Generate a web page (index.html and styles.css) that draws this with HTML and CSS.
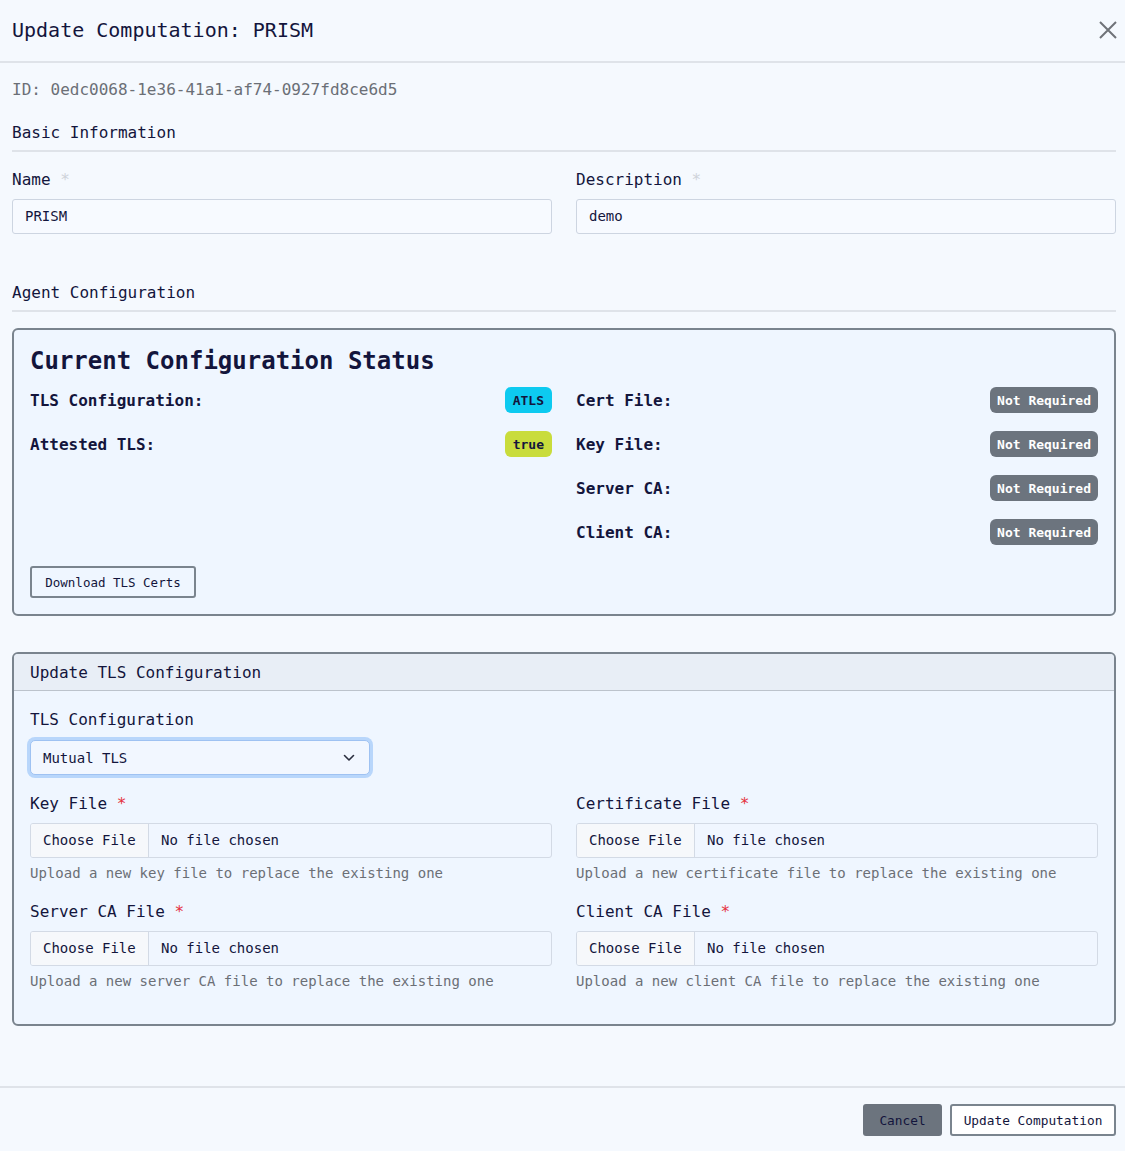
FILE: index.html
```html
<!DOCTYPE html>
<html lang="en">
<head>
<meta charset="utf-8">
<title>Update Computation: PRISM</title>
<link rel="stylesheet" href="styles.css">
</head>
<body>
<div class="modal">
  <header class="modal-header">
    <h1 class="modal-title">Update Computation: PRISM</h1>
    <button class="close-btn" aria-label="Close">
      <svg width="18" height="18" viewBox="0 0 18 18"><path d="M1 1L17 17M17 1L1 17" stroke="#6f7378" stroke-width="2" fill="none"/></svg>
    </button>
  </header>

  <div class="modal-body">
    <p class="id-line">ID: 0edc0068-1e36-41a1-af74-0927fd8ce6d5</p>

    <h2 class="section-title">Basic Information</h2>
    <div class="grid-2">
      <div class="field">
        <label class="field-label">Name <span class="req-light">*</span></label>
        <div class="text-input">PRISM</div>
      </div>
      <div class="field">
        <label class="field-label">Description <span class="req-light">*</span></label>
        <div class="text-input">demo</div>
      </div>
    </div>

    <h2 class="section-title agent">Agent Configuration</h2>

    <section class="status-card">
      <h3 class="status-title">Current Configuration Status</h3>
      <div class="status-grid">
        <div class="status-col">
          <div class="status-row"><span class="status-key">TLS Configuration:</span><span class="badge badge-info">ATLS</span></div>
          <div class="status-row"><span class="status-key">Attested TLS:</span><span class="badge badge-lime">true</span></div>
        </div>
        <div class="status-col">
          <div class="status-row"><span class="status-key">Cert File:</span><span class="badge badge-grey">Not Required</span></div>
          <div class="status-row"><span class="status-key">Key File:</span><span class="badge badge-grey">Not Required</span></div>
          <div class="status-row"><span class="status-key">Server CA:</span><span class="badge badge-grey">Not Required</span></div>
          <div class="status-row"><span class="status-key">Client CA:</span><span class="badge badge-grey">Not Required</span></div>
        </div>
      </div>
      <button class="btn-outline">Download TLS Certs</button>
    </section>

    <section class="update-card">
      <div class="update-header">Update TLS Configuration</div>
      <div class="update-body">
        <label class="field-label">TLS Configuration</label>
        <div class="select">
          <span>Mutual TLS</span>
          <svg width="12" height="8" viewBox="0 0 12 8"><path d="M1.5 1.5L6 6L10.5 1.5" stroke="#2a2d3e" stroke-width="1.6" fill="none" stroke-linecap="round" stroke-linejoin="round"/></svg>
        </div>

        <div class="grid-2 files">
          <div class="field">
            <label class="field-label">Key File <span class="req">*</span></label>
            <div class="file-input"><span class="file-btn">Choose File</span><span class="file-name">No file chosen</span></div>
            <p class="help">Upload a new key file to replace the existing one</p>
          </div>
          <div class="field">
            <label class="field-label">Certificate File <span class="req">*</span></label>
            <div class="file-input"><span class="file-btn">Choose File</span><span class="file-name">No file chosen</span></div>
            <p class="help">Upload a new certificate file to replace the existing one</p>
          </div>
          <div class="field">
            <label class="field-label">Server CA File <span class="req">*</span></label>
            <div class="file-input"><span class="file-btn">Choose File</span><span class="file-name">No file chosen</span></div>
            <p class="help">Upload a new server CA file to replace the existing one</p>
          </div>
          <div class="field">
            <label class="field-label">Client CA File <span class="req">*</span></label>
            <div class="file-input"><span class="file-btn">Choose File</span><span class="file-name">No file chosen</span></div>
            <p class="help">Upload a new client CA file to replace the existing one</p>
          </div>
        </div>
      </div>
    </section>
  </div>

  <footer class="modal-footer">
    <button class="btn-cancel">Cancel</button>
    <button class="btn-primary">Update Computation</button>
  </footer>
</div>
</body>
</html>
```

FILE: styles.css
```css
* { box-sizing: border-box; }

html, body {
  margin: 0;
  padding: 0;
  background: #f5f9fe;
}

body {
  font-family: "DejaVu Sans Mono", "Liberation Mono", monospace;
  color: #13153c;
}

.modal {
  width: 1125px;
  min-height: 1151px;
  display: flex;
  flex-direction: column;
}

.modal-header {
  height: 63px;
  display: flex;
  align-items: center;
  justify-content: space-between;
  padding: 0 8px 0 12px;
  border-bottom: 2px solid #dfe3e9;
}

.modal-title {
  margin: 0 0 2px;
  font-size: 20px;
  font-weight: 400;
  line-height: 28px;
}

.close-btn {
  background: none;
  border: 0;
  padding: 0;
  width: 18px;
  height: 18px;
  display: flex;
  margin-top: -1px;
}

.modal-body {
  padding: 15px 9px 0 12px;
  flex: 1;
}

.id-line {
  margin: 0;
  font-size: 16px;
  line-height: 24px;
  color: #6b6f76;
}

.section-title {
  margin: 19px 0 0;
  font-size: 16px;
  font-weight: 400;
  line-height: 24px;
  padding-bottom: 5px;
  border-bottom: 2px solid #dfe3e9;
}

.section-title.agent {
  margin-top: 47px;
}

.grid-2 {
  display: grid;
  grid-template-columns: 1fr 1fr;
  column-gap: 24px;
  margin-top: 16px;
}

.field-label {
  display: block;
  font-size: 16px;
  line-height: 24px;
  margin-bottom: 7px;
}

.req-light { color: #cfd3da; }
.req { color: #e5323e; }

.text-input {
  height: 35px;
  border: 1px solid #cdd5e1;
  border-radius: 3px;
  background: #f7faff;
  font-size: 14px;
  line-height: 33px;
  padding: 0 12px;
}

.status-card {
  margin-top: 16px;
  border: 2px solid #7a848e;
  border-radius: 6px;
  background: #eff6ff;
  padding: 15px 16px 16px;
}

.status-title {
  margin: 0;
  font-size: 24px;
  line-height: 32px;
  font-weight: 700;
}

.status-grid {
  display: grid;
  grid-template-columns: 1fr 1fr;
  column-gap: 24px;
  margin-top: 10px;
}

.status-col {
  display: flex;
  flex-direction: column;
  gap: 18px;
}

.status-row {
  height: 26px;
  display: flex;
  align-items: center;
  justify-content: space-between;
}

.status-key {
  font-size: 16px;
  font-weight: 700;
}

.badge {
  height: 26px;
  display: inline-flex;
  align-items: center;
  padding: 0 7px;
  border-radius: 6px;
  font-size: 13px;
  font-weight: 700;
}

.badge-info { background: #0dcaf0; color: #13153c; padding: 0 8px; }
.badge-lime { background: #c9dc3c; color: #13153c; padding: 0 8px; }
.badge-grey { background: #6c747e; color: #ffffff; }

.btn-outline {
  margin-top: 21px;
  height: 32px;
  width: 166px;
  padding: 0;
  border: 2px solid #7a848e;
  border-radius: 3px;
  background: transparent;
  font-family: inherit;
  font-size: 12.5px;
  color: #13153c;
}

.update-card {
  margin-top: 36px;
  border: 2px solid #7a848e;
  border-radius: 6px;
  background: #eff6ff;
  overflow: hidden;
}

.update-header {
  height: 37px;
  line-height: 37px;
  padding: 0 16px;
  font-size: 16px;
  background: #e8eef6;
  border-bottom: 1px solid #bcc3cc;
}

.update-body {
  padding: 17px 16px 33px;
}

.update-body > .field-label {
  margin-bottom: 8px;
}

.select {
  width: 340px;
  height: 35px;
  border: 1px solid #9fc2f2;
  border-radius: 5px;
  box-shadow: 0 0 0 3px #b8d6fb;
  background: #f2f7ff;
  display: flex;
  align-items: center;
  justify-content: space-between;
  padding: 0 14px 0 12px;
  font-size: 14px;
}

.grid-2.files {
  margin-top: 17px;
  row-gap: 17px;
}

.file-input {
  height: 35px;
  display: flex;
  border: 1px solid #d3dae5;
  border-radius: 3px;
  background: #f0f6ff;
  font-size: 14px;
  line-height: 33px;
  overflow: hidden;
}

.file-btn {
  padding: 0 12px;
  width: 118px;
  background: #f6f8fb;
  border-right: 1px solid #d3dae5;
}

.file-name {
  padding-left: 12px;
}

.help {
  margin: 5px 0 0;
  font-size: 14px;
  line-height: 20px;
  color: #6b6f76;
}

.modal-footer {
  margin-top: 60px;
  border-top: 2px solid #dfe3e9;
  padding: 16px 9px 16px 12px;
  display: flex;
  justify-content: flex-end;
  gap: 8px;
}

.btn-cancel {
  height: 32px;
  width: 79px;
  padding: 0;
  border: 0;
  border-radius: 3px;
  background: #6c747e;
  color: #13153c;
  font-family: inherit;
  font-size: 12.8px;
}

.btn-primary {
  height: 32px;
  width: 166px;
  padding: 0;
  border: 2px solid #7a848e;
  border-radius: 3px;
  background: #ffffff;
  color: #13153c;
  font-family: inherit;
  font-size: 12.8px;
}
```
